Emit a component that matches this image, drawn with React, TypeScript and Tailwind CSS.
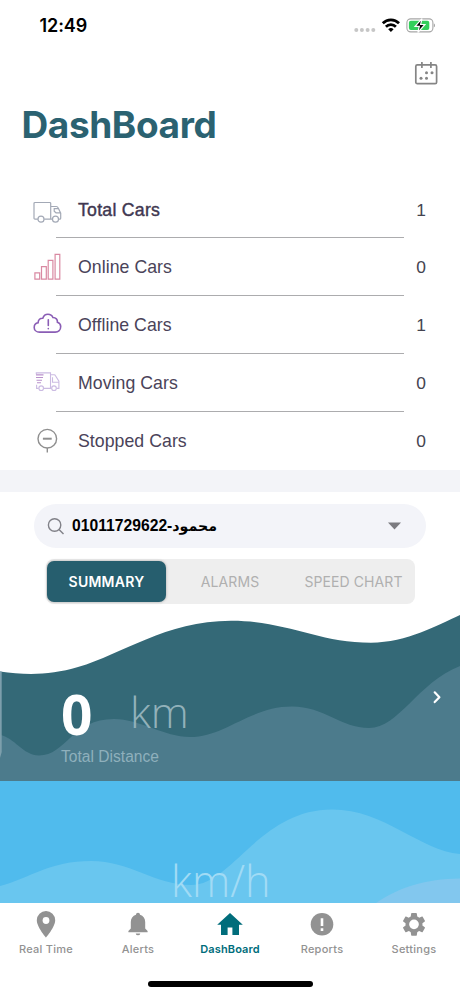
import type { ReactNode } from "react";

const helv = "font-['Liberation_Sans',Arial,sans-serif]";
const inter = "font-[Inter,sans-serif]";

function StatusBar() {
  return (
    <div className="flex h-[51px] items-center justify-between pl-[39.5px] pr-[25px]">
      <span className={`${inter} text-[18px] font-semibold leading-none text-black tracking-[-0.1px]`}>12:49</span>
      <svg width="84" height="22" viewBox="0 0 84 22">
        <g fill="#c6c6c6">
          <circle cx="5.3" cy="15.1" r="2" />
          <circle cx="10.9" cy="15.1" r="2" />
          <circle cx="16.6" cy="15.1" r="2" />
          <circle cx="22.3" cy="15.1" r="2" />
        </g>
        <g fill="none" stroke="#000" strokeWidth="2.7">
          <path d="M31.8 8.2a11.3 11.3 0 0 1 16.2 0" />
          <path d="M34.9 11.7a7 7 0 0 1 10 0" />
        </g>
        <path d="M39.9 17l-2.7-2.8a3.9 3.9 0 0 1 5.4 0z" />
        <rect x="55.9" y="3.9" width="26" height="13" rx="3.8" fill="#fff" stroke="#a6a6a6" strokeWidth="1.1" />
        <rect x="57.9" y="5.7" width="20.4" height="9.4" rx="2" fill="#33cf5b" />
        <path d="M82.9 8.5v3.8c1.3-.5 1.3-3.3 0-3.8z" fill="#999" />
        <path d="M71 3.700l-6.900 7.600h4.200l-1.500 6.400 7.100-8.200h-4.300z" fill="#000" stroke="#fff" strokeWidth="1.2" />
      </svg>
    </div>
  );
}

const icons: Record<string, ReactNode> = {
  total: (
    <g stroke="#a3a9b6" strokeWidth="1.2">
      <path d="M5.9 29.2H3a1 1 0 0 1-1-1V13.5a1 1 0 0 1 1-1h14.8a.9.9 0 0 1 .9.9v15.8h-6.500M18.700 16.500h5.600a2 2 0 0 1 1.800 1.200l2.600 5.500v5a1 1 0 0 1-1 1h-1.100M18.700 29.200h1.600M26.700 18.600h-4.500v2.700l1.800 1.500h4.600" />
      <circle cx="9" cy="29.200" r="3" />
      <circle cx="23.500" cy="29.200" r="3" />
    </g>
  ),
  online: (
    <g stroke="#d989a2" strokeWidth="1.2">
      <path d="M2.9 24.8h4.8v6.4H2.9zM9.5 18.7h4.8v12.5H9.5zM16.2 12.4h4.7v18.8h-4.7zM23.1 6.3h4.7v24.9h-4.7z" />
    </g>
  ),
  offline: (
    <g stroke="#8a5db5" strokeWidth="1.6" strokeLinecap="round">
      <path d="M7.600 27.100c-3.200 0-5.400-2-5.400-4.700 0-2.400 1.500-4.200 3.900-4.600.1-3 2-4.800 4.700-4.600C11.700 10.600 13.400 9.300 15.900 9.300c2.400 0 4.200 1.200 5 3.200 3 .1 4.800 2 4.500 4.700 2.200.7 3.300 2.300 3.300 4.400 0 3.300-2.300 5.500-5.500 5.500z" />
      <path d="M16.300 14.800v5.600M16.300 23.600v.1" />
    </g>
  ),
  moving: (
    <g strokeWidth="1.1" transform="translate(0 .7)">
      <g stroke="#cbbbe2">
        <path d="M4.300 10.500V9.200h14.200v15.500H12M18.500 11h3.600a1.500 1.500 0 0 1 1.400 1l3.400 5.500v7.200h-2.500M20.500 13.500v5h6M4.600 21v3.700h2M16.500 24.700h3" />
        <circle cx="9.200" cy="24.500" r="2.300" />
        <circle cx="22" cy="24.500" r="2.300" />
      </g>
      <path stroke="#b991cb" d="M4 11.200h7.500M4 13.800h7M4.500 16.500h5.500M5 19h4" />
    </g>
  ),
  stopped: (
    <g stroke="#8f8f8f" transform="translate(0 .5)">
      <circle cx="15.300" cy="17.200" r="9.300" strokeWidth="1.400" />
      <path d="M15.300 26.500v4.600" strokeWidth="1.400" />
      <path d="M10.900 17.200h8.800" strokeWidth="2" />
    </g>
  ),
};

const rows = [
  { icon: "total", label: "Total Cars", value: 1 },
  { icon: "online", label: "Online Cars", value: 0 },
  { icon: "offline", label: "Offline Cars", value: 1 },
  { icon: "moving", label: "Moving Cars", value: 0 },
  { icon: "stopped", label: "Stopped Cars", value: 0 },
];

function CarRow({ icon, label, value, first, last }: { icon: string; label: string; value: number; first: boolean; last: boolean }) {
  return (
    <div className="flex h-[57.75px] flex-col">
      <div className="flex min-h-0 flex-1 items-center pl-8 pr-[34px]">
        <svg width="32" height="38" viewBox="0 0 32 38" fill="none" className="shrink-0">{icons[icon]}</svg>
        <span className={`${helv} ml-[14px] flex-1 pt-[3px] text-[17.7px] leading-none ${first ? "tracking-[0.25px] text-[#403750] [-webkit-text-stroke:0.4px_#403750]" : "tracking-[0.05px] text-[#4a4359]"}`}>{label}</span>
        <span className={`${helv} pt-[3px] text-[17.4px] leading-none text-[#444350]`}>{value}</span>
      </div>
      <div className={`mx-14 h-px ${last ? "" : "bg-[#acacae]"}`} />
    </div>
  );
}

function DistanceCard() {
  return (
    <section className="relative h-[177px] shrink-0">
      <svg className="absolute inset-0" width="460" height="177" viewBox="0 0 460 177">
        <path d="M0 67.500C25 71 50 71.500 78 63C123 50 165 17 231 16.700C286 16.500 318 38.700 371 38.700C407 38.500 438 21 460 11V177H0z" fill="#346977" />
        <path d="M0 131C14 133 23 151.500 39 151.500C66 151.500 72 115 114 115C140 115 164 133 190 133C225 133 250 102.500 292 102.500C324 102.500 341 124 369 124C399 124 417 79 460 62V177H0z" fill="#4c7b8c" />
        <path d="M0 67.500h1.700V148L0 154z" fill="#7d9fac" />
      </svg>
      <div className="relative flex h-full flex-col pl-[61px]">
        <div className="mt-[81px] flex h-[57px] items-center">
          <span className="w-[69px] font-['Open_Sans',sans-serif] text-[55px] font-bold leading-none text-white">0</span>
          <span className="mb-[5px] flex-1 font-['Open_Sans',sans-serif] text-[43px] font-light leading-none text-[#92b1ba]">km</span>
          <svg width="12" height="16" viewBox="0 0 12 16" fill="none" className="mb-[34px] mr-[17.5px]">
            <path d="M3.700 3.300l4.700 4.900-4.700 4.900" stroke="#fff" strokeWidth="2.200" strokeLinecap="round" strokeLinejoin="round" />
          </svg>
        </div>
        <span className={`${helv} mt-[7px] text-[15.600px] leading-none text-[#8fb0bc]`}>Total Distance</span>
      </div>
    </section>
  );
}

function SpeedCard() {
  return (
    <section className="relative h-[122px] shrink-0 bg-[#50bbed]">
      <svg className="absolute inset-0" width="460" height="122" viewBox="0 0 460 122">
        <path d="M0 105C30 97 50 80 91 80C130 80 155 104 191 104C232 104 260 28.500 332 28.500C385 28.500 420 70 460 73V122H0z" fill="#69c6ef" />
        <path d="M376 122C400 106 425 98 460 97.500V122z" fill="#82c7ee" />
      </svg>
      <div className="relative pl-[171px] pt-[78px]">
        <span className="block font-['Open_Sans',sans-serif] text-[43.300px] font-light leading-none text-[#a1dbf5]">km/h</span>
      </div>
    </section>
  );
}

const tabs = [
  {
    label: "Real Time",
    icon: <><path d="M15 3a9.200 9.200 0 0 0-9.200 9.200C5.800 19 15 29.500 15 29.500S24.200 19 24.200 12.200A9.200 9.200 0 0 0 15 3z" /><circle cx="15" cy="12.500" r="3.400" fill="#fff" /></>,
  },
  {
    label: "Alerts",
    icon: <path d="M15 4.800c-1.200 0-2 .8-2 1.900-3.300 1-5.200 3.700-5.200 7.300v6.400l-2.400 2.500v1.300h19.200v-1.300l-2.400-2.500V14c0-3.600-1.900-6.300-5.200-7.300 0-1.100-.8-1.900-2-1.900zM12.700 25.500a2.350 2.350 0 0 0 4.600 0z" />,
  },
  { label: "DashBoard", active: true, icon: <path d="M15 5L2.200 16.800H6V27h6.600v-7.600h4.800V27H24V16.800h3.800z" /> },
  {
    label: "Reports",
    icon: <><circle cx="15" cy="16.300" r="11.300" /><path d="M13.700 10.200h2.600v7.900h-2.600zM13.700 20.300h2.600v2.600h-2.600z" fill="#fff" /></>,
  },
  {
    label: "Settings",
    icon: (
      <path transform="translate(1.440 2.800) scale(1.130)" fillRule="evenodd" d="M19.430 12.980c.040-.320.070-.640.070-.980s-.030-.660-.070-.980l2.110-1.650c.190-.150.240-.420.120-.640l-2-3.460c-.120-.220-.390-.300-.610-.220l-2.490 1c-.520-.400-1.080-.730-1.690-.980l-.380-2.650A.488.488 0 0 0 14 2h-4c-.250 0-.460.180-.490.420l-.380 2.650c-.610.250-1.170.590-1.690.980l-2.490-1c-.230-.090-.490 0-.610.220l-2 3.460c-.130.220-.070.490.120.640l2.110 1.650c-.040.320-.070.650-.070.980s.030.660.070.980l-2.110 1.650c-.190.150-.240.420-.120.640l2 3.460c.120.220.390.300.610.220l2.490-1c.520.400 1.080.730 1.690.980l.380 2.650c.030.240.240.420.490.420h4c.250 0 .460-.180.490-.420l.380-2.650c.610-.250 1.170-.590 1.690-.980l2.490 1c.230.090.490 0 .610-.220l2-3.460c.120-.220.070-.490-.120-.640zM12 16.300a4.300 4.300 0 1 1 0-8.600 4.300 4.300 0 0 1 0 8.600z" />
    ),
  },
];

function TabBar() {
  return (
    <nav className="relative flex h-[93px] shrink-0 flex-col bg-white">
      <div className="flex h-[77px]">
        {tabs.map((t) => (
          <div key={t.label} className={`flex w-[92px] flex-col items-center pt-[5px] ${t.active ? "text-[#006d7b]" : "text-[#929292]"}`}>
            <svg width="30" height="32" viewBox="0 0 30 32" fill="currentColor">{t.icon}</svg>
            <span className={`${inter} mt-1 whitespace-nowrap text-[11px] leading-none ${t.active ? "font-semibold tracking-[0.15px]" : "font-medium tracking-[0.25px]"}`}>{t.label}</span>
          </div>
        ))}
      </div>
      <div className="mx-auto mt-px h-[6px] w-[165px] rounded-full bg-black" />
    </nav>
  );
}

export default function App() {
  return (
    <main className="flex h-[996px] w-[460px] flex-col overflow-hidden bg-white">
      <StatusBar />
      <div className="flex h-[46px] justify-end pr-[21px] pt-[9px]">
        <svg width="26" height="27" viewBox="0 0 26 27" fill="none" stroke="#858585">
          <rect x="2.800" y="4.900" width="20.800" height="18.800" rx="1.500" strokeWidth="1.700" />
          <path d="M8.900 2v6M17.900 2v6" strokeWidth="1.700" />
          <g fill="#858585" stroke="none"><circle cx="13.500" cy="12.700" r="1.500" /><circle cx="19" cy="12.700" r="1.500" /><circle cx="8" cy="18.300" r="1.500" /><circle cx="13.500" cy="18.300" r="1.500" /></g>
        </svg>
      </div>
      <h1 className={`${inter} h-[83.5px] shrink-0 pl-[21.5px] pt-[9px] text-[37px] font-bold leading-[37px] tracking-[-0.4px] text-[#2b6271]`}>DashBoard</h1>
      <div className="h-[289.5px] shrink-0">
        {rows.map((r, i) => <CarRow key={r.label} {...r} first={i === 0} last={i === 4} />)}
      </div>
      <div className="h-[22px] shrink-0 bg-[#f3f4f8]" />
      <div className="ml-[34px] mt-3 flex h-11 w-[392px] shrink-0 items-center rounded-full bg-[#f3f4f9] pl-[13px] pr-[25px]">
        <svg width="19" height="19" viewBox="0 0 19 19" fill="none" stroke="#818188" strokeWidth="1.400"><circle cx="7.600" cy="8" r="6.200" /><path d="M12 12.400l4.500 4.600" /></svg>
        <span dir="ltr" className="ml-[6px] flex-1 whitespace-nowrap font-['Liberation_Sans','DejaVu_Sans',sans-serif] text-[15.700px] font-bold leading-none text-black">01011729622-<bdi className="text-[14.200px]">محمود</bdi></span>
        <svg width="13" height="8" viewBox="0 0 13 8"><path d="M0 .5h13L6.500 7.500z" fill="#7b7b80" /></svg>
      </div>
      <div className={`${inter} ml-[46px] mt-[11px] flex h-[45px] w-[369px] shrink-0 rounded-lg bg-[#eee] text-[14px] leading-none text-[#b0b0b0]`}>
        <div className="ml-[1px] mt-[2px] flex h-[41px] w-[119px] items-center justify-center rounded-[7px] bg-[#265e6e] font-semibold tracking-[0.25px] text-white shadow-[0_0_3px_rgba(0,0,0,0.3)]">SUMMARY</div>
        <div className="flex w-[128px] items-center justify-center tracking-[0.1px]">ALARMS</div>
        <div className="flex flex-1 items-center justify-center pr-[2px] tracking-[0.1px]">SPEED CHART</div>
      </div>
      <DistanceCard />
      <SpeedCard />
      <TabBar />
    </main>
  );
}
